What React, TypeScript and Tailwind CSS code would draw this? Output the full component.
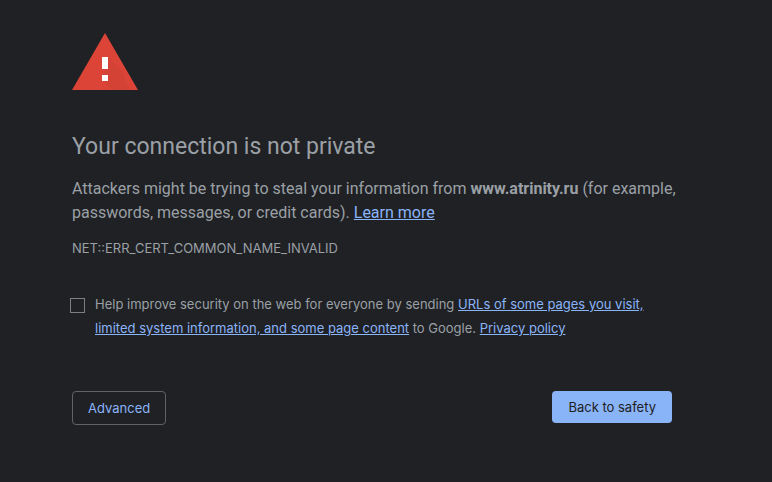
function WarningIcon() {
  return (
    <svg width="66" height="57" viewBox="0 0 66 57" aria-hidden="true">
      <path d="M33 0 66 57H0Z" fill="#db4437" />
      <path d="M36 24 50 38 54 48 58 57H40L30 47Z" fill="#c93f34" opacity=".35" />
      <path d="M30 24h6v12h-6zM30 42h6v6h-6z" fill="#fff" />
    </svg>
  )
}

function TextLink({ children }: { children: string }) {
  return (
    <a href="#" className="text-[#8ab4f8] underline">
      {children}
    </a>
  )
}

export default function App() {
  return (
    <div className="min-h-screen bg-[#202124] px-[72px] pt-[33px] pb-14 font-['Inter',sans-serif] text-[#9aa0a6]">
      <main className="max-w-[600px]">
        <WarningIcon />
        <h1 className="mt-[41px] font-['Roboto',sans-serif] text-[23px] leading-8">Your connection is not private</h1>
        <p className="mt-3.5 -mr-4 font-['Roboto',sans-serif] text-base leading-6">
          Attackers might be trying to steal your information from <strong>www.atrinity.ru</strong> (for example,
          passwords, messages, or credit cards). <TextLink>Learn more</TextLink>
        </p>
        <p className="mt-[15px] text-[13px] leading-4">NET::ERR_CERT_COMMON_NAME_INVALID</p>
        <div className="mt-9 flex items-start gap-2.5">
          <input
            id="opt-in"
            type="checkbox"
            className="mt-1.5 -ml-0.5 size-[15px] shrink-0 appearance-none border border-[#7b7f83]"
          />
          <label htmlFor="opt-in" className="text-[13px] leading-6">
            Help improve security on the web for everyone by sending{" "}
            <TextLink>URLs of some pages you visit, limited system information, and some page content</TextLink> to
            Google. <TextLink>Privacy policy</TextLink>
          </label>
        </div>
        <div className="mt-[51px] flex items-start justify-between text-[13px] leading-5">
          <button className="rounded border border-[#5f6368] px-[15px] py-1.5 text-[#8ab4f8]">Advanced</button>
          <button className="rounded bg-[#8ab4f8] px-4 py-1.5 text-[#202124]">Back to safety</button>
        </div>
      </main>
    </div>
  )
}
